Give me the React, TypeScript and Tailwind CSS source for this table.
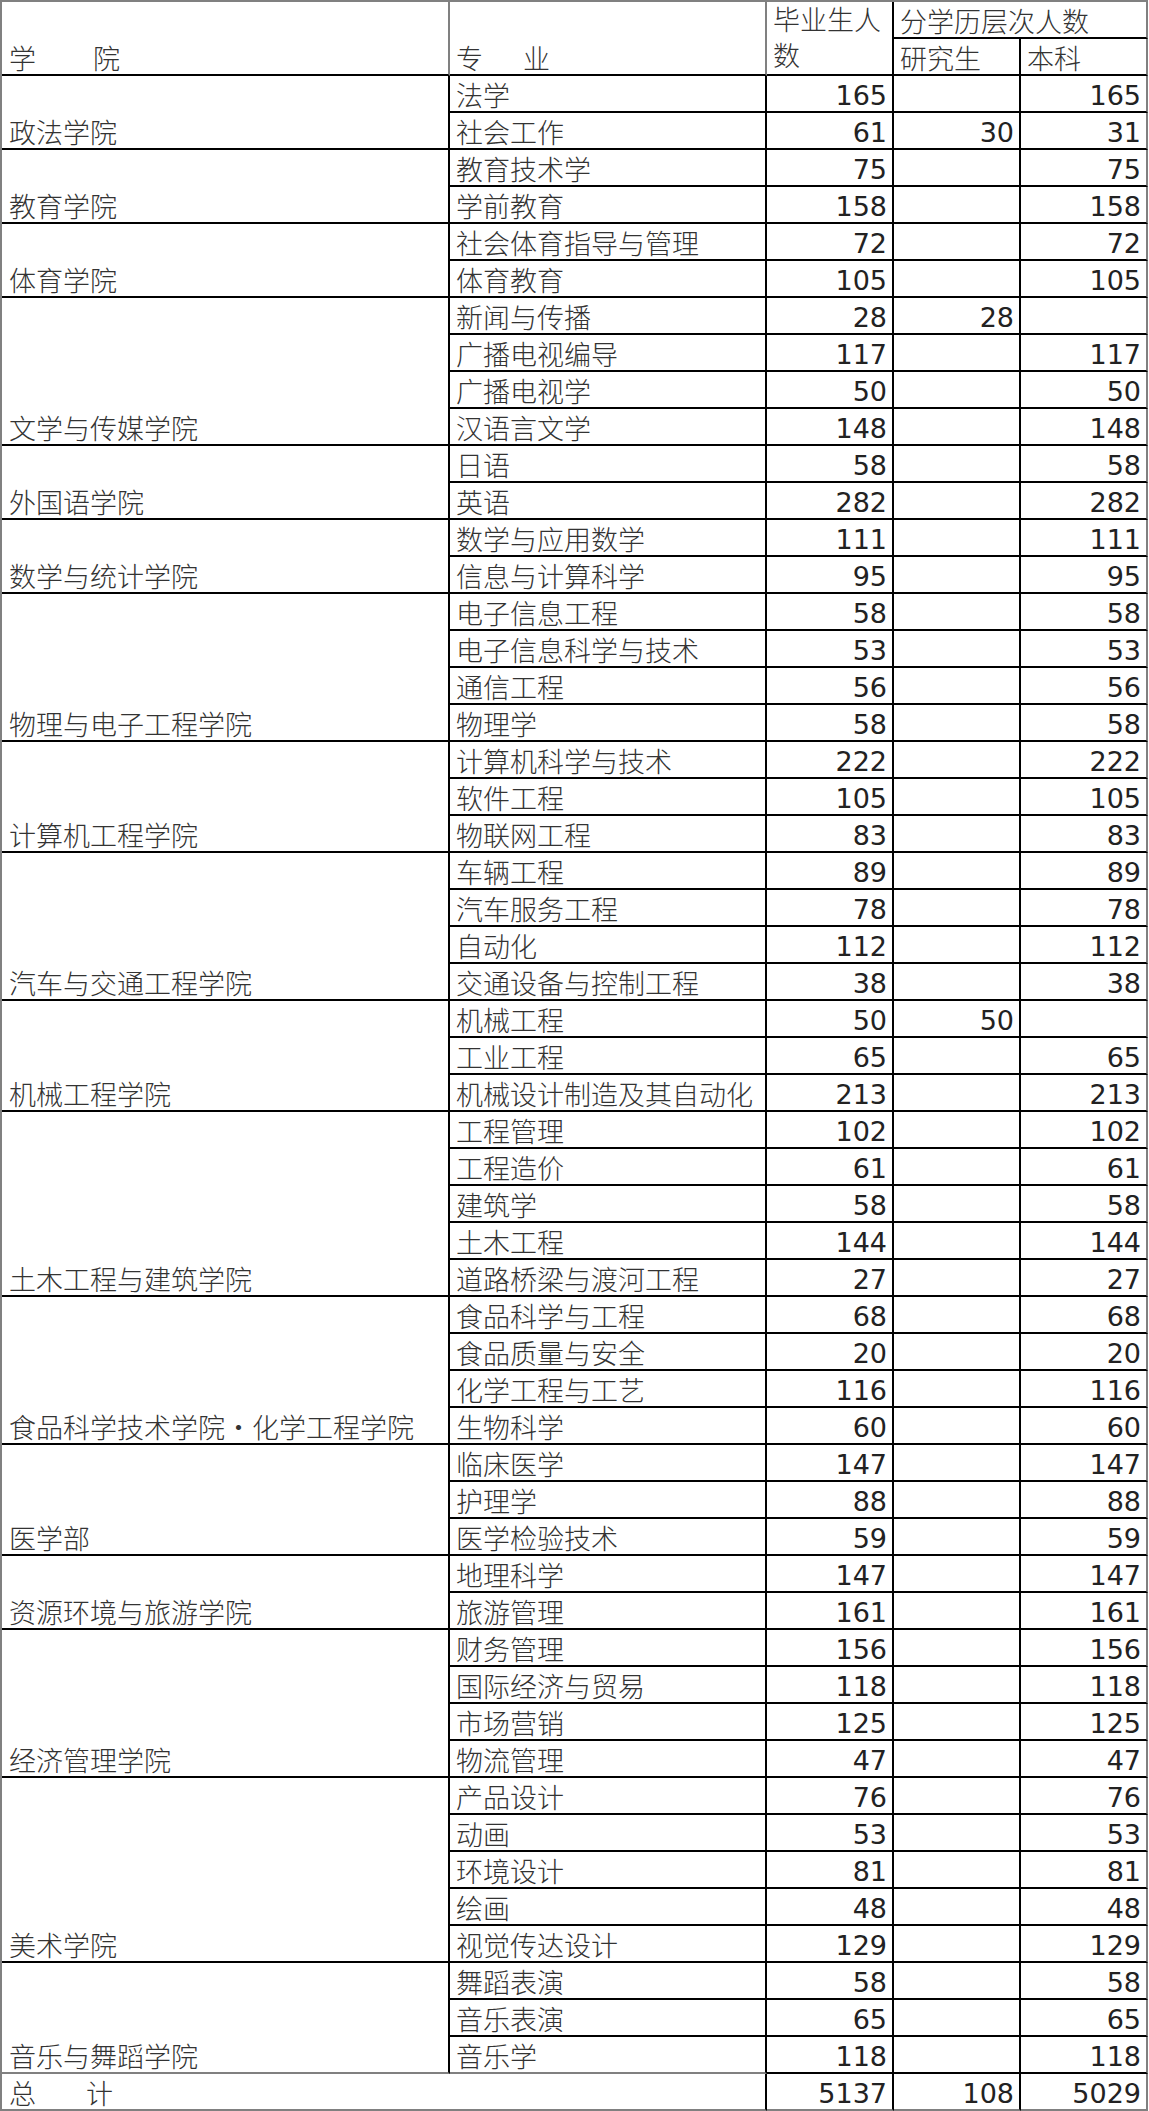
import React from 'react';

// [专业, 毕业生人数, 研究生]  本科 = 毕业生人数 - 研究生
type Row = [string, number, number?];

interface College {
  name: string;
  rows: Row[];
}

const colleges: College[] = [
  { name: '政法学院', rows: [['法学', 165], ['社会工作', 61, 30]] },
  { name: '教育学院', rows: [['教育技术学', 75], ['学前教育', 158]] },
  { name: '体育学院', rows: [['社会体育指导与管理', 72], ['体育教育', 105]] },
  {
    name: '文学与传媒学院',
    rows: [['新闻与传播', 28, 28], ['广播电视编导', 117], ['广播电视学', 50], ['汉语言文学', 148]],
  },
  { name: '外国语学院', rows: [['日语', 58], ['英语', 282]] },
  { name: '数学与统计学院', rows: [['数学与应用数学', 111], ['信息与计算科学', 95]] },
  {
    name: '物理与电子工程学院',
    rows: [['电子信息工程', 58], ['电子信息科学与技术', 53], ['通信工程', 56], ['物理学', 58]],
  },
  { name: '计算机工程学院', rows: [['计算机科学与技术', 222], ['软件工程', 105], ['物联网工程', 83]] },
  {
    name: '汽车与交通工程学院',
    rows: [['车辆工程', 89], ['汽车服务工程', 78], ['自动化', 112], ['交通设备与控制工程', 38]],
  },
  { name: '机械工程学院', rows: [['机械工程', 50, 50], ['工业工程', 65], ['机械设计制造及其自动化', 213]] },
  {
    name: '土木工程与建筑学院',
    rows: [['工程管理', 102], ['工程造价', 61], ['建筑学', 58], ['土木工程', 144], ['道路桥梁与渡河工程', 27]],
  },
  {
    name: '食品科学技术学院·化学工程学院',
    rows: [['食品科学与工程', 68], ['食品质量与安全', 20], ['化学工程与工艺', 116], ['生物科学', 60]],
  },
  { name: '医学部', rows: [['临床医学', 147], ['护理学', 88], ['医学检验技术', 59]] },
  { name: '资源环境与旅游学院', rows: [['地理科学', 147], ['旅游管理', 161]] },
  {
    name: '经济管理学院',
    rows: [['财务管理', 156], ['国际经济与贸易', 118], ['市场营销', 125], ['物流管理', 47]],
  },
  {
    name: '美术学院',
    rows: [['产品设计', 76], ['动画', 53], ['环境设计', 81], ['绘画', 48], ['视觉传达设计', 129]],
  },
  { name: '音乐与舞蹈学院', rows: [['舞蹈表演', 58], ['音乐表演', 65], ['音乐学', 118]] },
];

const cn = "font-['Noto_Sans_CJK_SC','Noto_Sans_CJK_JP',sans-serif] font-light text-[27px] text-[#333]";
const num = "font-['DejaVu_Sans',sans-serif] text-[27px] text-[#222]";

const NumCell = ({ value, last, bottomGray }: { value?: number; last?: boolean; bottomGray?: boolean }) => (
  <div
    className={`w-[127px] h-full flex items-end justify-end pr-[5px] border-r-2 border-b-2 ${
      last ? 'border-r-[#808080]' : 'border-r-black'
    } ${bottomGray ? 'border-b-[#808080]' : 'border-b-black'} ${num} leading-[31px]`}
  >
    {value ? value : ''}
  </div>
);

const CollegeBlock = ({ college, isLast }: { college: College; isLast: boolean }) => (
  <div className="flex">
    <div
      className={`w-[448px] flex items-end pl-[7px] pb-[1px] border-r-2 border-r-black border-b-2 ${
        isLast ? 'border-b-[#808080]' : 'border-b-black'
      } ${cn} leading-[30px]`}
    >
      {college.name}
    </div>
    <div className="flex flex-col">
      {college.rows.map(([major, total, grad], i) => {
        const lastRow = isLast && i === college.rows.length - 1;
        const ug = total - (grad ?? 0);
        return (
          <div key={major} className="flex h-[37px]">
            <div
              className={`w-[317px] h-full flex items-end pl-[6px] pb-[1px] border-r-2 border-r-black border-b-2 ${
                lastRow ? 'border-b-[#808080]' : 'border-b-black'
              } ${cn} leading-[30px] whitespace-nowrap`}
            >
              {major}
            </div>
            <NumCell value={total} />
            <NumCell value={grad} />
            <NumCell value={ug} last />
          </div>
        );
      })}
    </div>
  </div>
);

export default function App() {
  return (
    <div className="min-h-screen bg-white">
      <div className="w-[1148px] border-t-2 border-l-2 border-[#808080]">
        {/* header */}
        <div className="flex h-[74px]">
          <div className={`w-[448px] flex items-end pl-[7px] pb-[1px] border-r-2 border-r-[#808080] border-b-2 border-b-black ${cn} leading-[30px]`}>
            <span>学</span>
            <span className="ml-[57px]">院</span>
          </div>
          <div className={`w-[317px] flex items-end pl-[6px] pb-[1px] border-r-2 border-r-[#808080] border-b-2 border-b-black ${cn} leading-[30px]`}>
            <span>专</span>
            <span className="ml-[40px]">业</span>
          </div>
          <div className={`w-[127px] flex items-end pl-[6px] pb-[1px] border-r-2 border-r-black border-b-2 border-b-black ${cn} leading-[36px]`}>
            <span>毕业生人数</span>
          </div>
          <div className="w-[254px] flex flex-col">
            <div className={`h-[37px] flex items-end pl-[6px] pb-[1px] border-r-2 border-r-[#808080] border-b-2 border-b-black ${cn} leading-[30px]`}>
              分学历层次人数
            </div>
            <div className="flex h-[37px]">
              <div className={`w-[127px] flex items-end pl-[6px] pb-[1px] border-r-2 border-r-black border-b-2 border-b-black ${cn} leading-[30px]`}>
                研究生
              </div>
              <div className={`w-[127px] flex items-end pl-[6px] pb-[1px] border-r-2 border-r-[#808080] border-b-2 border-b-black ${cn} leading-[30px]`}>
                本科
              </div>
            </div>
          </div>
        </div>

        {colleges.map((c, i) => (
          <CollegeBlock key={c.name} college={c} isLast={i === colleges.length - 1} />
        ))}

        {/* total */}
        <div className="flex h-[37px]">
          <div className={`w-[765px] h-full flex items-end pl-[7px] pb-[1px] border-r-2 border-r-black border-b-2 border-b-[#808080] ${cn} leading-[30px]`}>
            <span>总</span>
            <span className="ml-[50px]">计</span>
          </div>
          <NumCell value={5137} bottomGray />
          <NumCell value={108} bottomGray />
          <NumCell value={5029} bottomGray last />
        </div>
      </div>
    </div>
  );
}
